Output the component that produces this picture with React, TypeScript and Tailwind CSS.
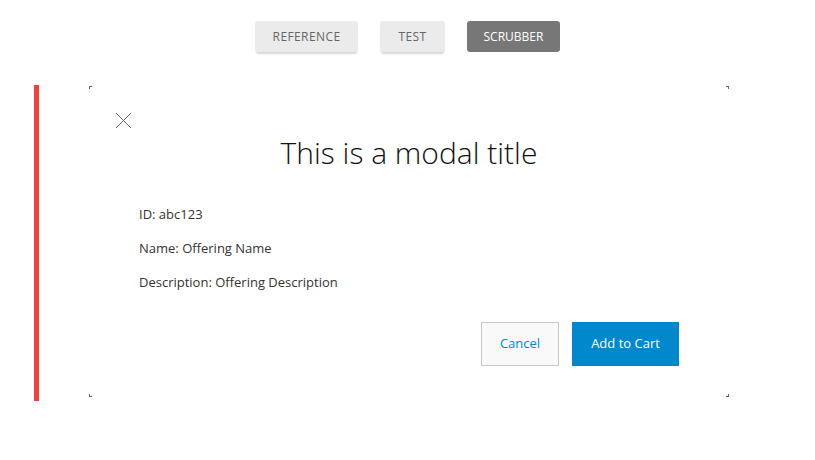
import React from "react";

export default function App() {
  const font = { fontFamily: '"Open Sans", "Noto Sans", sans-serif' };
  return (
    <div className="w-[815px] h-[460px] bg-white" style={font}>
      <div className="flex justify-center gap-[22px] pt-[21px]">
        <div className="h-[31px] px-[18px] flex items-center bg-[#ebebeb] rounded-[3px] text-[12px] tracking-[0.4px] text-[#666] shadow-[0_3px_2px_-1px_#d8d8d8]">
          REFERENCE
        </div>
        <div className="h-[31px] px-[18px] flex items-center bg-[#ebebeb] rounded-[3px] text-[12px] tracking-[0.4px] text-[#666] shadow-[0_3px_2px_-1px_#d8d8d8]">
          TEST
        </div>
        <div className="h-[31px] px-[17px] flex items-center bg-[#777777] rounded-[3px] text-[12px] text-white">
          SCRUBBER
        </div>
      </div>

      <div className="mt-[33px] ml-[34px] h-[316px] border-l-[5px] border-[#f44336] flex">
        <div className="relative ml-[50px] mt-[1px] w-[640px] h-[311px] px-[50px] pt-[47px]">
          <span className="absolute left-0 top-0 w-[3px] h-[3px] border-t border-l border-[#666]" />
          <span className="absolute right-0 top-0 w-[3px] h-[3px] border-t border-r border-[#666]" />
          <span className="absolute left-0 bottom-0 w-[3px] h-[3px] border-b border-l border-[#666]" />
          <span className="absolute right-0 bottom-0 w-[3px] h-[3px] border-b border-r border-[#666]" />

          <svg
            className="absolute left-[26px] top-[26px]"
            width="17"
            height="17"
            viewBox="0 0 17 17"
          >
            <path d="M1 1 L16 16 M16 1 L1 16" stroke="#666" strokeWidth="1" fill="none" />
          </svg>

          <h1 className="text-center text-[30px] leading-[40px] font-light text-[#111]">
            This is a modal title
          </h1>

          <div className="mt-[31px] flex flex-col gap-[14px] text-[13px] leading-[20px] text-[#333]">
            <div>ID: abc123</div>
            <div>Name: Offering Name</div>
            <div>Description: Offering Description</div>
          </div>

          <div className="mt-[30px] flex justify-end gap-[13px]">
            <button className="w-[78px] h-[44px] border border-[#c8c8c8] bg-[#f9f9f9] text-[13px] text-[#0088cc]">
              Cancel
            </button>
            <button className="w-[107px] h-[44px] bg-[#0088cc] text-[13px] text-white">
              Add to Cart
            </button>
          </div>
        </div>
      </div>
    </div>
  );
}
